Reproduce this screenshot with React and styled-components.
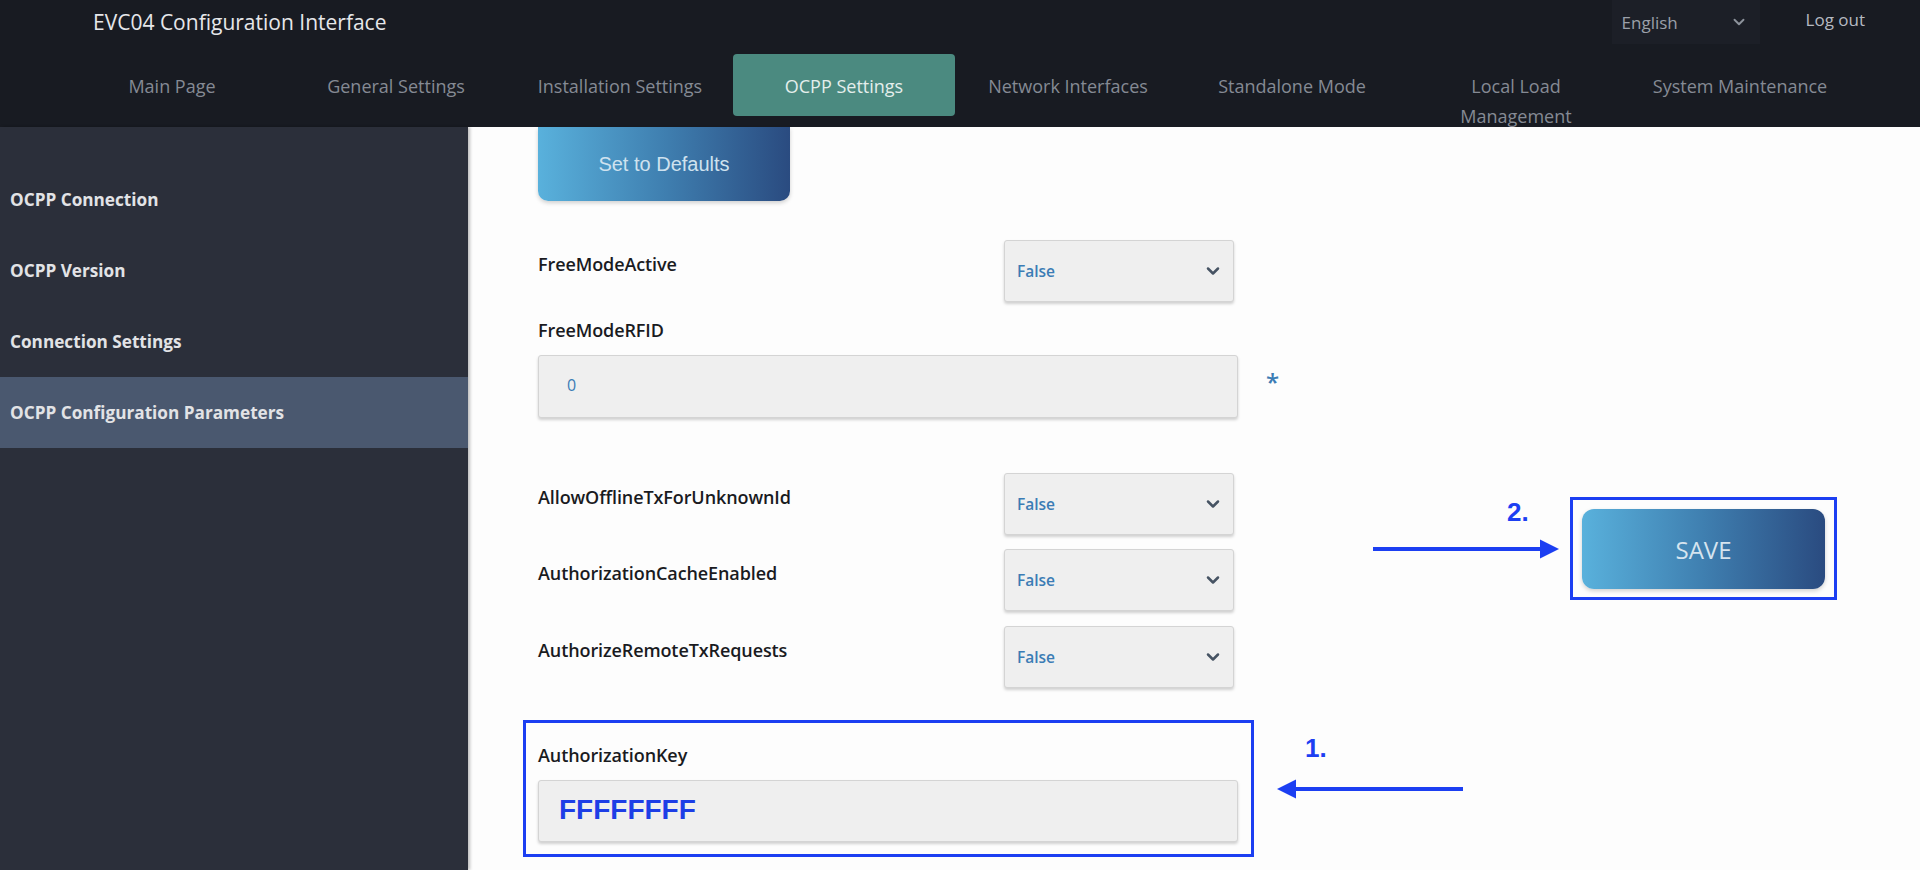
import React from "react";
import styled, { createGlobalStyle } from "styled-components";
import { ChevronDown } from "lucide-react";

const GlobalStyle = createGlobalStyle`
  html, body {
    margin: 0;
    padding: 0;
    background: #fdfdfd;
  }
  body {
    font-family: "Open Sans", "Noto Sans", sans-serif;
  }
  * {
    box-sizing: border-box;
  }
`;

const ANNOTATION = "#1c3ff2";

const Page = styled.div`
  width: 1920px;
  height: 870px;
  display: flex;
  flex-direction: column;
  overflow: hidden;
`;

const Header = styled.header`
  height: 127px;
  flex-shrink: 0;
  background: #181b22;
  display: flex;
  flex-direction: column;
  overflow: hidden;
`;

const TopBar = styled.div`
  height: 45px;
  display: flex;
  align-items: flex-start;
  justify-content: space-between;
  padding: 0 55px 0 93px;
`;

const Title = styled.div`
  font-size: 21px;
  line-height: 45px;
  color: #e6e7ea;
`;

const TopRight = styled.div`
  display: flex;
  align-items: flex-start;
  gap: 46px;
`;

const LangBox = styled.div`
  width: 148px;
  height: 44px;
  background: #1c1f27;
  display: flex;
  align-items: center;
  justify-content: space-between;
  padding: 0 12px 0 10px;
  font-size: 17px;
  color: #9ba0a9;
  svg {
    color: #8d939c;
  }
`;

const LogOut = styled.div`
  font-size: 17px;
  line-height: 40px;
  color: #b5b9c1;
`;

const Tabs = styled.nav`
  margin-top: 9px;
  display: flex;
  gap: 2px;
  padding-left: 61px;
`;

const Tab = styled.div`
  width: 222px;
  height: 62px;
  flex-shrink: 0;
  padding: 17px 22px 0;
  text-align: center;
  font-size: 18px;
  line-height: 30px;
  border-radius: 4px;
  color: ${(p) => (p.$active ? "#e4eeec" : "#858a94")};
  background: ${(p) => (p.$active ? "#4b8a80" : "transparent")};
`;

const Body = styled.div`
  flex: 1;
  display: flex;
  min-height: 0;
`;

const Sidebar = styled.aside`
  width: 468px;
  flex-shrink: 0;
  background: #2b2f3a;
  padding-top: 37px;
  box-shadow: 2px 0 3px rgba(0, 0, 0, 0.25);
  position: relative;
  z-index: 1;
`;

const SideItem = styled.div`
  height: 71px;
  display: flex;
  align-items: center;
  padding-left: 10px;
  font-size: 17.2px;
  font-weight: 700;
  color: #e2e3e6;
  background: ${(p) => (p.$active ? "#4a586f" : "transparent")};
`;

const Main = styled.main`
  flex: 1;
  display: flex;
  background: #fdfdfd;
`;

const FormColumn = styled.div`
  padding-left: 70px;
  display: flex;
  flex-direction: column;
  align-items: flex-start;
`;

const GradientButton = styled.button`
  border: none;
  font-family: ${(p) => (p.$arial ? '"Liberation Sans", Arial, sans-serif' : '"Open Sans", sans-serif')};
  background: linear-gradient(90deg, #59b1dc 0%, #3f7fb0 50%, #2a4b80 100%);
  box-shadow: 0 2px 4px rgba(0, 0, 0, 0.18);
  cursor: pointer;
`;

const DefaultsButton = styled(GradientButton)`
  width: 252px;
  height: 74px;
  border-radius: 0 0 10px 10px;
  font-size: 20px;
  color: #cfe2ef;
`;

const SelectRow = styled.div`
  width: 700px;
  margin-top: ${(p) => p.$mt}px;
  display: flex;
  justify-content: space-between;
  align-items: flex-start;
`;

const Label = styled.div`
  font-size: 18px;
  font-weight: 600;
  line-height: 24px;
  letter-spacing: -0.1px;
  color: #1a1b1f;
  margin-top: ${(p) => p.$mt || 0}px;
`;

const fieldBox = `
  background: #efefef;
  border: 1px solid #d4d4d4;
  border-radius: 3px;
  box-shadow: 0 2px 3px rgba(0, 0, 0, 0.18);
  display: flex;
  align-items: center;
`;

const SelectBox = styled.div`
  ${fieldBox}
  width: 230px;
  height: 62px;
  margin-right: 4px;
  justify-content: space-between;
  padding: 0 10px 0 12px;
  font-size: 15.5px;
  font-weight: 600;
  color: #3b7cb5;
  svg {
    color: #465363;
  }
`;

const InputRow = styled.div`
  margin-top: 13px;
  display: flex;
  align-items: center;
  gap: 28px;
`;

const TextInput = styled.div`
  ${fieldBox}
  width: ${(p) => p.$w || 700}px;
  height: ${(p) => p.$h || 63}px;
  padding-left: ${(p) => p.$pl || 28}px;
  padding-bottom: 3px;
  font-size: 16px;
  color: #3b7cb5;
`;

const Asterisk = styled.span`
  font-size: 24px;
  font-weight: 600;
  color: #3b7cb5;
  margin-top: -10px;
`;

const Highlight = styled.div`
  position: relative;
  border: 3px solid ${ANNOTATION};
`;

const KeyBox = styled(Highlight)`
  margin-top: 32px;
  margin-left: -15px;
  padding: 20px 13px 12px 12px;
`;

const KeyValue = styled.span`
  font-family: "Liberation Sans", Arial, sans-serif;
  font-weight: 700;
  font-size: 28px;
  color: #1d3ee6;
`;

const SideColumn = styled.div`
  margin-left: auto;
  padding: 370px 83px 0 0;
`;

const SaveBox = styled(Highlight)`
  width: 267px;
  padding: 9px 9px 8px;
`;

const SaveButton = styled(GradientButton)`
  width: 243px;
  height: 80px;
  border-radius: 12px;
  font-size: 24px;
  color: #d6e4ef;
`;

const Note = styled.div`
  position: absolute;
  left: ${(p) => p.$left};
  top: ${(p) => p.$top}px;
  font-family: "Liberation Sans", Arial, sans-serif;
  font-weight: 700;
  font-size: 26px;
  line-height: 28px;
  color: ${ANNOTATION};
`;

const ArrowWrap = styled.div`
  position: absolute;
  left: ${(p) => p.$left};
  top: ${(p) => p.$top}px;
  line-height: 0;
`;

function Arrow({ dir, width = 186 }) {
  return (
    <svg width={width} height="20" viewBox={`0 0 ${width} 20`}>
      {dir === "left" ? (
        <>
          <line x1="16" y1="10" x2={width} y2="10" stroke={ANNOTATION} strokeWidth="4" />
          <polygon points="0,10 19,0.5 19,19.5" fill={ANNOTATION} />
        </>
      ) : (
        <>
          <line x1="0" y1="10" x2={width - 16} y2="10" stroke={ANNOTATION} strokeWidth="4" />
          <polygon points={`${width},10 ${width - 19},0.5 ${width - 19},19.5`} fill={ANNOTATION} />
        </>
      )}
    </svg>
  );
}

const tabs = [
  "Main Page",
  "General Settings",
  "Installation Settings",
  "OCPP Settings",
  "Network Interfaces",
  "Standalone Mode",
  "Local Load Management",
  "System Maintenance",
];

const sideItems = [
  "OCPP Connection",
  "OCPP Version",
  "Connection Settings",
  "OCPP Configuration Parameters",
];

function Select({ value = "False" }) {
  return (
    <SelectBox>
      <span>{value}</span>
      <ChevronDown size={20} strokeWidth={3} />
    </SelectBox>
  );
}

function BoolRow({ label, mt }) {
  return (
    <SelectRow $mt={mt}>
      <Label $mt={12}>{label}</Label>
      <Select />
    </SelectRow>
  );
}

export default function App() {
  return (
    <Page>
      <GlobalStyle />
      <Header>
        <TopBar>
          <Title>EVC04 Configuration Interface</Title>
          <TopRight>
            <LangBox>
              <span>English</span>
              <ChevronDown size={18} strokeWidth={2.5} />
            </LangBox>
            <LogOut>Log out</LogOut>
          </TopRight>
        </TopBar>
        <Tabs>
          {tabs.map((t) => (
            <Tab key={t} $active={t === "OCPP Settings"}>
              {t}
            </Tab>
          ))}
        </Tabs>
      </Header>

      <Body>
        <Sidebar>
          {sideItems.map((s) => (
            <SideItem key={s} $active={s === "OCPP Configuration Parameters"}>
              {s}
            </SideItem>
          ))}
        </Sidebar>

        <Main>
          <FormColumn>
            <DefaultsButton $arial>Set to Defaults</DefaultsButton>

            <BoolRow label="FreeModeActive" mt={39} />

            <Label $mt={16}>FreeModeRFID</Label>
            <InputRow>
              <TextInput>0</TextInput>
              <Asterisk>*</Asterisk>
            </InputRow>

            <BoolRow label="AllowOfflineTxForUnknownId" mt={55} />
            <BoolRow label="AuthorizationCacheEnabled" mt={14} />
            <BoolRow label="AuthorizeRemoteTxRequests" mt={15} />

            <KeyBox>
              <Label>AuthorizationKey</Label>
              <TextInput $h={62} $pl={20} style={{ marginTop: 13 }}>
                <KeyValue>FFFFFFFF</KeyValue>
              </TextInput>
              <Note $left="calc(100% + 54px)" $top={11}>1.</Note>
              <ArrowWrap $left="calc(100% + 26px)" $top={56}>
                <Arrow dir="left" />
              </ArrowWrap>
            </KeyBox>
          </FormColumn>

          <SideColumn>
            <SaveBox>
              <SaveButton>SAVE</SaveButton>
              <Note $left="-66px" $top={-2}>2.</Note>
              <ArrowWrap $left="-200px" $top={39}>
                <Arrow dir="right" />
              </ArrowWrap>
            </SaveBox>
          </SideColumn>
        </Main>
      </Body>
    </Page>
  );
}
